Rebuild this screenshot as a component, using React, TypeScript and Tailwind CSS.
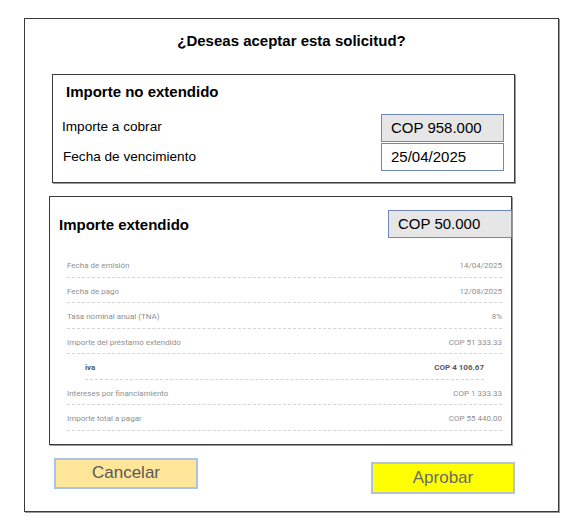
import React from "react";

const rows: { label: string; value: string; sub?: boolean }[] = [
  { label: "Fecha de emisión", value: "14/04/2025" },
  { label: "Fecha de pago", value: "12/08/2025" },
  { label: "Tasa nominal anual (TNA)", value: "8%" },
  { label: "Importe del préstamo extendido", value: "COP 51 333.33" },
  { label: "iva", value: "COP 4 106.67", sub: true },
  { label: "Intereses por financiamiento", value: "COP 1 333.33" },
  { label: "Importe total a pagar", value: "COP 55 440.00" },
];

export default function App() {
  return (
    <div className="w-[581px] h-[526px] bg-white pt-[18px] pl-[24px]" style={{ fontFamily: '"Liberation Sans", Arial, sans-serif' }}>
      <div className="w-[535px] h-[494px] border border-[#3a3a3a] shadow-[1px_1px_0_#9a9a9a] flex flex-col">
        <div className="pt-[13px] text-center text-[15px] leading-[18px] font-bold text-black">
          ¿Deseas aceptar esta solicitud?
        </div>

        <div className="mt-[24px] ml-[27px] w-[463px] border border-[#3a3a3a] shadow-[1px_1px_0_#9a9a9a] pl-[9px] pr-[10px] pt-[8px] pb-[11px]">
          <div className="pl-[4px] text-[15px] leading-[18px] font-bold text-black">Importe no extendido</div>
          <div className="mt-[13px] flex items-center justify-between">
            <span className="-mt-[2px] text-[13.6px] text-black">Importe a cobrar</span>
            <div className="w-[123px] h-[28px] border border-[#7088b8] bg-[#e6e6e6] pl-[9px] flex items-center text-[15px] text-black">COP 958.000</div>
          </div>
          <div className="mt-[1px] flex items-center justify-between">
            <span className="mt-[1px] pl-[1px] text-[13.6px] text-black">Fecha de vencimiento</span>
            <div className="w-[123px] h-[28px] border border-[#7088b8] bg-white pl-[9px] flex items-center text-[15px] text-black">25/04/2025</div>
          </div>
        </div>

        <div className="mt-[13px] ml-[24px] w-[463px] border border-[#3a3a3a] shadow-[1px_1px_0_#9a9a9a] pt-[13px] pb-[13px]">
          <div className="flex items-center justify-between pl-[9px]">
            <span className="mt-[2px] text-[15px] font-bold text-black">Importe extendido</span>
            <div className="-mr-px w-[124px] h-[28px] border border-[#7088b8] bg-[#e6e6e6] pl-[9px] flex items-center text-[15px] text-black">COP 50.000</div>
          </div>
          <div className="mt-[14px] pl-[17px] pr-[9px]" style={{ fontFamily: 'Roboto, "Liberation Sans", sans-serif' }}>
            {rows.map((r) => (
              <div
                key={r.label}
                className={
                  r.sub
                    ? "ml-[18px] mr-[18px] flex justify-between border-b border-dashed border-[#d4d4d4] pt-[8px] pb-[4.5px] text-[8px] leading-[12px] font-bold text-[#5a5a5a]"
                    : "flex justify-between border-b border-dashed border-[#d4d4d4] pt-[8px] pb-[4.5px] text-[8px] leading-[12px] text-[#8f8f8f]"
                }
              >
                <span>{r.label}</span>
                <span>{r.value}</span>
              </div>
            ))}
          </div>
        </div>

        <div className="mt-[13px] flex items-start justify-between pl-[29px] pr-[43px]">
          <div className="w-[144px] h-[31px] border-2 border-[#a9c4e6] bg-[#ffe699] flex items-center justify-center text-[17px] text-[#595959]">
            Cancelar
          </div>
          <div className="mt-[4px] w-[144px] h-[32px] border-2 border-[#b4c2d6] bg-[#ffff00] flex items-center justify-center text-[17px] text-[#6b6b6b]">
            Aprobar
          </div>
        </div>
      </div>
    </div>
  );
}
